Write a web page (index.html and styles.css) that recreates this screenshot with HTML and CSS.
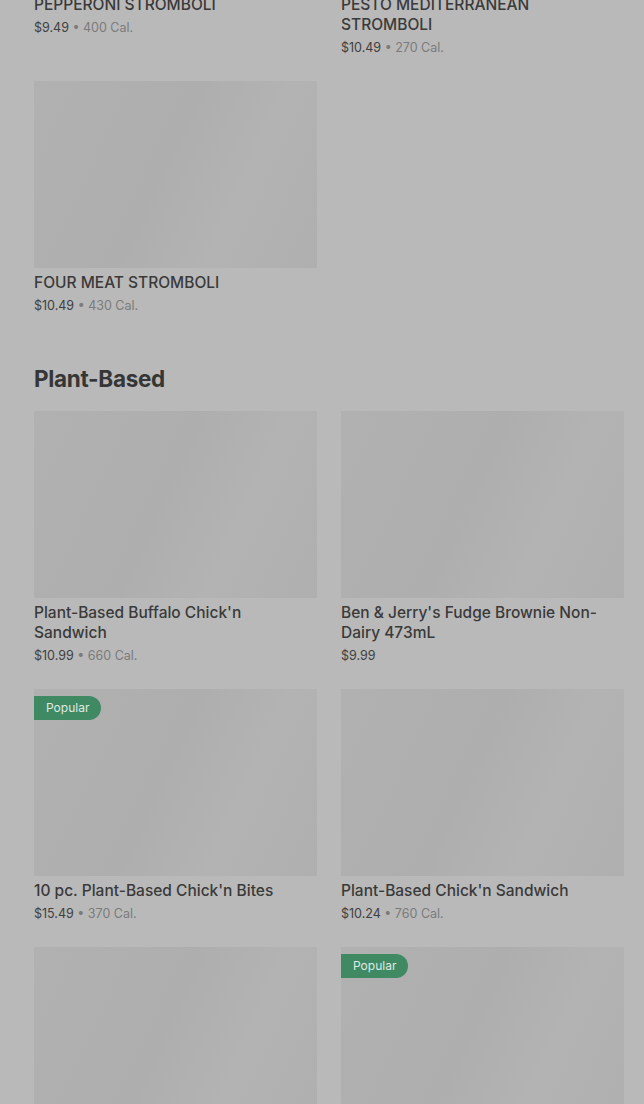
FILE: index.html
```html
<!DOCTYPE html>
<html lang="en">
<head>
<meta charset="utf-8">
<title>Menu</title>
<link rel="stylesheet" href="styles.css">
</head>
<body>
<main class="menu">
  <section class="section section-first">
    <div class="grid">
      <div class="card">
        <div class="thumb"></div>
        <div class="name">PEPPERONI STROMBOLI</div>
        <div class="meta"><span class="price">$9.49</span> <span class="cal">• 400 Cal.</span></div>
      </div>
      <div class="card">
        <div class="thumb"></div>
        <div class="name">PESTO MEDITERRANEAN STROMBOLI</div>
        <div class="meta"><span class="price">$10.49</span> <span class="cal">• 270 Cal.</span></div>
      </div>
      <div class="card">
        <div class="thumb"></div>
        <div class="name">FOUR MEAT STROMBOLI</div>
        <div class="meta"><span class="price">$10.49</span> <span class="cal">• 430 Cal.</span></div>
      </div>
    </div>
  </section>
  <section class="section">
    <h2 class="heading">Plant-Based</h2>
    <div class="grid">
      <div class="card">
        <div class="thumb"></div>
        <div class="name">Plant-Based Buffalo Chick'n Sandwich</div>
        <div class="meta"><span class="price">$10.99</span> <span class="cal">• 660 Cal.</span></div>
      </div>
      <div class="card">
        <div class="thumb"></div>
        <div class="name">Ben &amp; Jerry's Fudge Brownie Non-Dairy 473mL</div>
        <div class="meta"><span class="price">$9.99</span></div>
      </div>
      <div class="card">
        <div class="thumb"><span class="badge">Popular</span></div>
        <div class="name">10 pc. Plant-Based Chick'n Bites</div>
        <div class="meta"><span class="price">$15.49</span> <span class="cal">• 370 Cal.</span></div>
      </div>
      <div class="card">
        <div class="thumb"></div>
        <div class="name">Plant-Based Chick'n Sandwich</div>
        <div class="meta"><span class="price">$10.24</span> <span class="cal">• 760 Cal.</span></div>
      </div>
      <div class="card">
        <div class="thumb"></div>
      </div>
      <div class="card">
        <div class="thumb"><span class="badge">Popular</span></div>
      </div>
    </div>
  </section>
</main>
</body>
</html>
```

FILE: styles.css
```css
html, body {
  margin: 0;
  padding: 0;
  background: #b9b9b9;
  overflow: hidden;
}
body {
  font-family: Inter, "Liberation Sans", Arial, sans-serif;
  color: #3a3a3a;
}
.menu {
  padding: 0 20px 0 34px;
  margin-top: -197px;
}
.grid {
  display: grid;
  grid-template-columns: 283px 283px;
  column-gap: 24px;
  row-gap: 23px;
}
.section + .section {
  margin-top: 47px;
}
.heading {
  margin: 0 0 16px 0;
  font-size: 22.5px;
  line-height: 32px;
  font-weight: 700;
  letter-spacing: -0.3px;
  color: #363636;
}
.card {
  display: flex;
  flex-direction: column;
}
.thumb {
  position: relative;
  height: 187px;
  background: linear-gradient(115deg, #b1b1b1 0%, #aeaeae 45%, #b3b3b3 70%, #afafaf 100%);
}
.badge {
  position: absolute;
  top: 7px;
  left: 0;
  height: 24px;
  line-height: 24px;
  padding: 0 12px;
  background: #3f8963;
  color: #dfeae3;
  font-size: 12px;
  border-radius: 0 12px 12px 0;
}
.name {
  margin-top: 5px;
  font-size: 15.5px;
  line-height: 20px;
  font-weight: 500;
  color: #3a3a3a;
}
.meta {
  margin-top: 3px;
  font-size: 12.5px;
  line-height: 20px;
}
.price {
  color: #3f3f3f;
}
.cal {
  color: #7b7b7b;
}
```
